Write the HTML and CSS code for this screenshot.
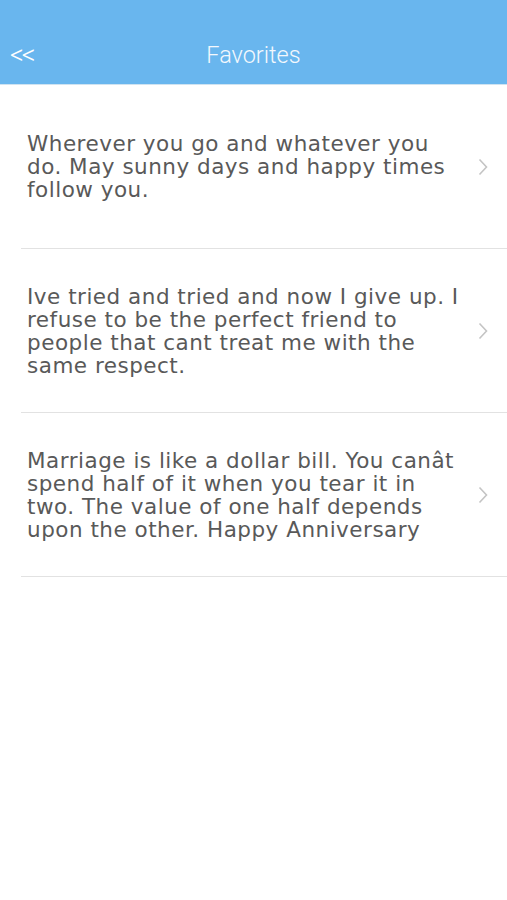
FILE: index.html
```html
<!DOCTYPE html>
<html>
<head>
<meta charset="utf-8">
<link rel="stylesheet" href="styles.css">
</head>
<body>
<header class="navbar">
  <span class="back">&lt;&lt;</span>
  <h1 class="title">Favorites</h1>
</header>
<ul class="list">
  <li class="row">
    <p class="quote">Wherever you go and whatever you do. May sunny days and happy times follow you.</p>
    <svg class="chev" width="10" height="18" viewBox="0 0 10 18"><path d="M1.5 1.5 L8.5 9 L1.5 16.5" fill="none" stroke="#c4c4c4" stroke-width="1.6"/></svg>
  </li>
  <li class="row">
    <p class="quote">Ive tried and tried and now I give up. I refuse to be the perfect friend to people that cant treat me with the same respect.</p>
    <svg class="chev" width="10" height="18" viewBox="0 0 10 18"><path d="M1.5 1.5 L8.5 9 L1.5 16.5" fill="none" stroke="#c4c4c4" stroke-width="1.6"/></svg>
  </li>
  <li class="row">
    <p class="quote">Marriage is like a dollar bill. You canât spend half of it when you tear it in two. The value of one half depends upon the other. Happy Anniversary</p>
    <svg class="chev" width="10" height="18" viewBox="0 0 10 18"><path d="M1.5 1.5 L8.5 9 L1.5 16.5" fill="none" stroke="#c4c4c4" stroke-width="1.6"/></svg>
  </li>
</ul>
</body>
</html>
```
FILE: styles.css
```css
html, body {
  margin: 0;
  padding: 0;
  background: #ffffff;
}
body {
  width: 507px;
  height: 900px;
  overflow: hidden;
}
.navbar {
  height: 84px;
  background: #69b6ee;
  border-bottom: 1px solid #cfe3f1;
  display: flex;
  align-items: flex-end;
  justify-content: center;
  position: relative;
  box-sizing: content-box;
}
.back {
  position: absolute;
  left: 10px;
  bottom: 14px;
  color: #ffffff;
  font-family: "Roboto", "Liberation Sans", sans-serif;
  font-weight: 300;
  font-size: 27px;
  line-height: 30px;
  letter-spacing: -2px;
}
.title {
  margin: 0 0 14px 0;
  color: #f3f8fd;
  font-family: "Roboto", "Liberation Sans", sans-serif;
  font-weight: 300;
  font-size: 23.5px;
  line-height: 30px;
}
.list {
  list-style: none;
  margin: 0;
  padding: 0 0 0 21px;
}
.row {
  height: 163px;
  border-bottom: 1px solid #e2e2e2;
  display: flex;
  align-items: center;
  padding-left: 6px;
  padding-right: 19px;
}
.quote {
  flex: 1;
  margin: 0;
  padding-right: 8px;
  color: #595959;
  font-family: "DejaVu Sans", sans-serif;
  font-size: 21.5px;
  line-height: 23px;
  letter-spacing: 0.5px;
}
.chev {
  flex: none;
}
```
